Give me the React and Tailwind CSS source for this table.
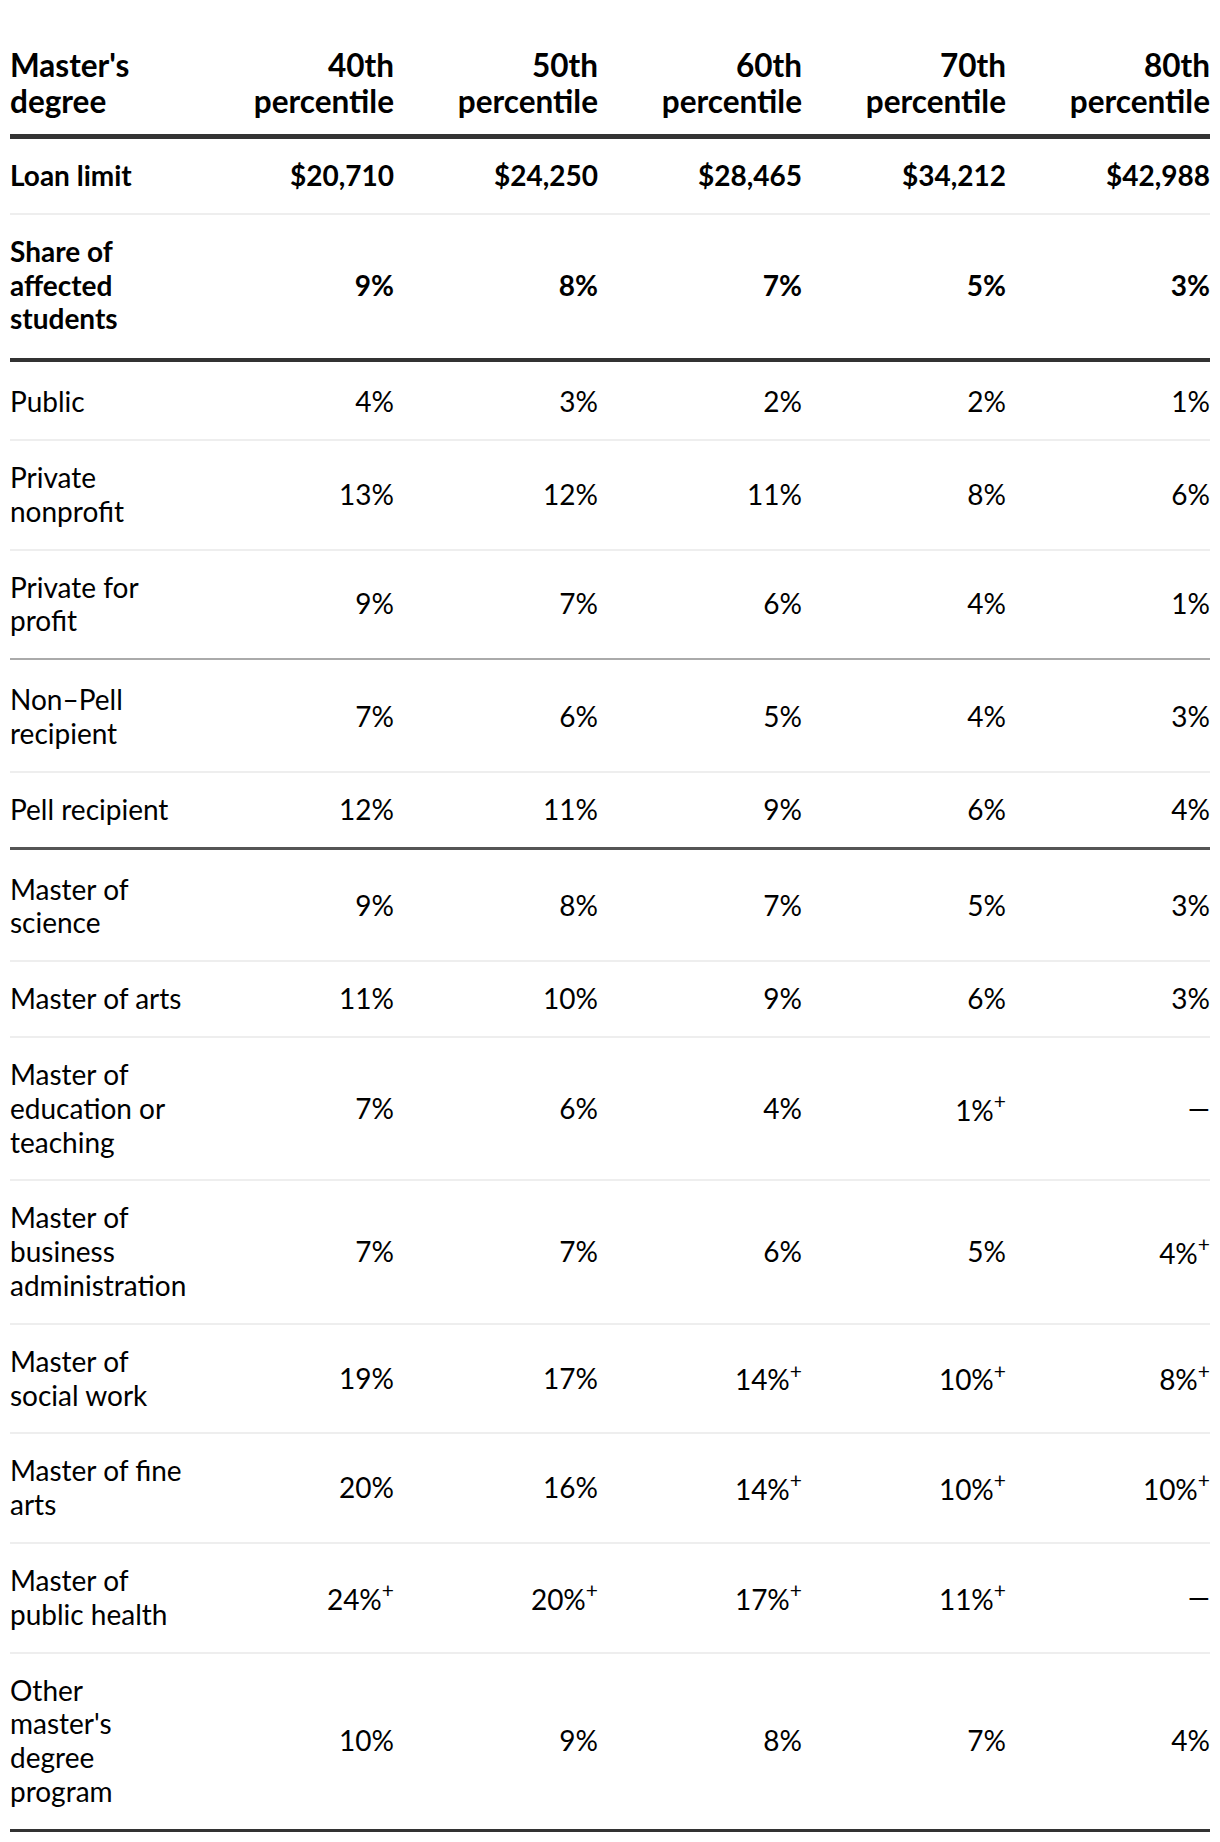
const HEAD = ['40th', '50th', '60th', '70th', '80th']

const ROWS = [
  { label: 'Loan limit', bold: true, values: ['$20,710', '$24,250', '$28,465', '$34,212', '$42,988'], border: 'border-b-2 border-[#eeeeee]', pb: 'pb-5' },
  { label: 'Share of affected students', bold: true, values: ['9%', '8%', '7%', '5%', '3%'], border: 'border-b-4 border-[#333333]', pb: 'pb-[22px]' },
  { label: 'Public', values: ['4%', '3%', '2%', '2%', '1%'], border: 'border-b-2 border-[#eeeeee]', first: true },
  { label: 'Private nonprofit', values: ['13%', '12%', '11%', '8%', '6%'], border: 'border-b-2 border-[#eeeeee]' },
  { label: 'Private for profit', values: ['9%', '7%', '6%', '4%', '1%'], border: 'border-b-2 border-[#aaaaaa]' },
  { label: 'Non\u2013Pell recipient', values: ['7%', '6%', '5%', '4%', '3%'], border: 'border-b-2 border-[#eeeeee]', first: true },
  { label: 'Pell recipient', values: ['12%', '11%', '9%', '6%', '4%'], border: 'border-b-[3px] border-[#555555]' },
  { label: 'Master of science', values: ['9%', '8%', '7%', '5%', '3%'], border: 'border-b-2 border-[#eeeeee]', first: true },
  { label: 'Master of arts', values: ['11%', '10%', '9%', '6%', '3%'], border: 'border-b-2 border-[#eeeeee]' },
  { label: 'Master of education or teaching', values: ['7%', '6%', '4%', '1%+', '\u2014'], border: 'border-b-2 border-[#eeeeee]' },
  { label: 'Master of business administration', values: ['7%', '7%', '6%', '5%', '4%+'], border: 'border-b-2 border-[#eeeeee]' },
  { label: 'Master of social work', values: ['19%', '17%', '14%+', '10%+', '8%+'], border: 'border-b-2 border-[#eeeeee]' },
  { label: 'Master of fine arts', values: ['20%', '16%', '14%+', '10%+', '10%+'], border: 'border-b-2 border-[#eeeeee]' },
  { label: 'Master of public health', values: ['24%+', '20%+', '17%+', '11%+', '\u2014'], border: 'border-b-2 border-[#eeeeee]' },
  { label: "Other master's degree program", values: ['10%', '9%', '8%', '7%', '4%'], border: 'border-b-[3px] border-[#333333]' },
]

function Value({ v }) {
  if (v.endsWith('+')) {
    return (
      <span>
        {v.slice(0, -1)}
        <sup className="text-[21px] font-normal leading-none align-[0.55em] top-0">+</sup>
      </span>
    )
  }
  return <span>{v}</span>
}

export default function App() {
  return (
    <div className="bg-white min-h-[1842px] px-[10px] text-black font-['Lato','Liberation_Sans',sans-serif] text-[28px] leading-[33.8px]">
      <div className="w-[1200px]">
        <div className="grid grid-cols-[180px_repeat(5,minmax(0,1fr))] items-end pt-[47px] pb-[15px] border-b-[5px] border-[#333333] font-bold text-[31.5px] leading-[36px]">
          <div>Master's degree</div>
          {HEAD.map((h) => (
            <div key={h} className="text-right">
              {h}
              <br />
              percentile
            </div>
          ))}
        </div>
        {ROWS.map((r) => (
          <div
            key={r.label}
            className={`grid grid-cols-[180px_repeat(5,minmax(0,1fr))] items-center ${r.pb || 'pb-5'} ${r.first ? 'pt-[23px]' : 'pt-5'} ${r.border} ${r.bold ? 'font-bold' : ''}`}
          >
            <div>{r.label}</div>
            {r.values.map((v, i) => (
              <div key={i} className="text-right">
                <Value v={v} />
              </div>
            ))}
          </div>
        ))}
      </div>
    </div>
  )
}
